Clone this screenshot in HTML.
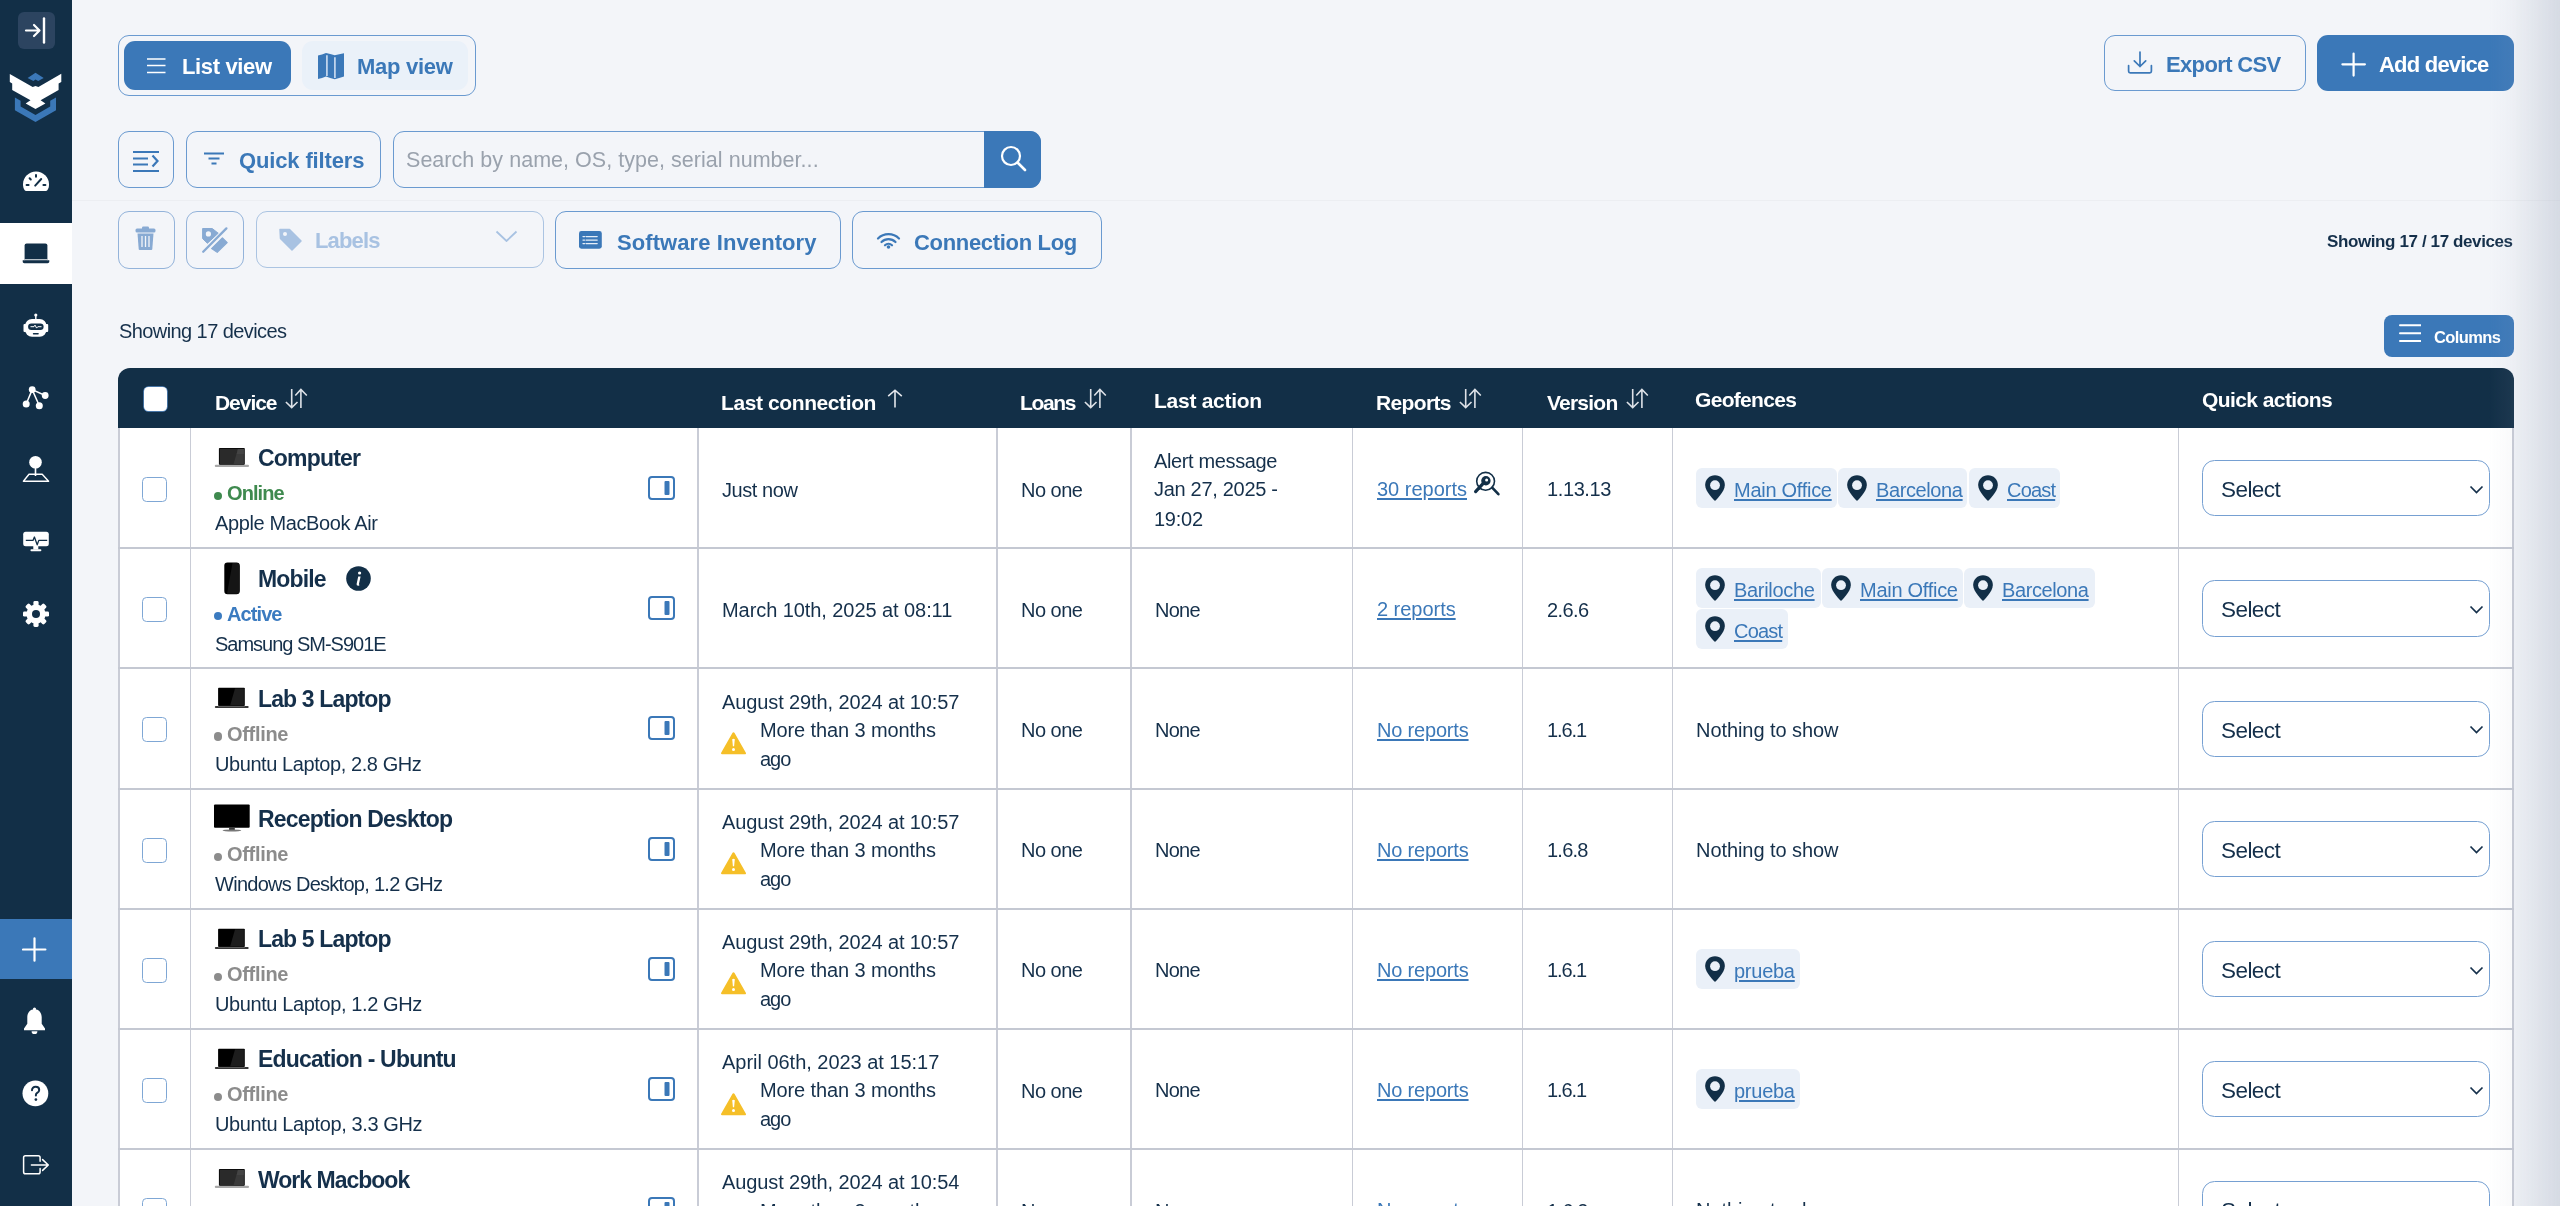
<!DOCTYPE html><html><head><meta charset="utf-8"><style>
html,body{margin:0;padding:0;}
body{width:2560px;height:1206px;overflow:hidden;position:relative;background:#f3f5f9;font-family:"Liberation Sans",sans-serif;}
.t{position:absolute;white-space:nowrap;line-height:1;will-change:transform;}
svg{display:block;}
</style></head><body>
<div style="position:absolute;left:0.0px;top:0.0px;width:72.0px;height:1206.0px;background:#122f47;"></div><div style="position:absolute;left:18.0px;top:12.0px;width:37.0px;height:37.0px;background:#2c4460;border-radius:6px;"></div><svg style="position:absolute;left:18.0px;top:12.0px" width="37" height="37" viewBox="0 0 37 37"><path d="M8 18.5h13.5M16 13l5.5 5.5L16 24" stroke="#fff" stroke-width="2.2" fill="none" stroke-linecap="round" stroke-linejoin="round"/><path d="M26 6.5v24" stroke="#fff" stroke-width="2.4" stroke-linecap="round"/></svg><svg style="position:absolute;left:0;top:60px" width="72" height="70" viewBox="0 60 72 70"><path d="M35.5 72.8 L43.7 77.9 L38.2 81 L35.5 79.5 L33.4 81 L27.6 77.9 Z" fill="#3b78b8"/><path d="M9.8 74 L32.7 87 L35.5 86 L38.4 87 L61.3 73.8 L61.3 82 L58.6 83.4 L58.6 89.9 L40.6 100.2 L45.4 103.4 L35.5 109.1 L25.7 103.4 L30.5 100.2 L12.2 89.9 L12.2 83.4 L9.8 82 Z" fill="#fff"/><path d="M14.9 97.6 L20.6 100.7 L20.6 106.5 L35.5 114.9 L50.2 106.5 L50.2 100.7 L56 97.6 L56 110.3 L35.5 121.9 L14.9 110.3 Z" fill="#3b78b8"/></svg><svg style="position:absolute;left:22.0px;top:170.0px" width="28" height="22" viewBox="0 0 28 22"><path d="M14 1.6C7 1.6 1 7.2 1 14.2c0 2.3 0.5 4.2 1.5 5.8 0.4 0.6 1 0.9 1.7 0.9h19.6c0.7 0 1.3-0.3 1.7-0.9 1-1.6 1.5-3.5 1.5-5.8C27 7.2 21 1.6 14 1.6z" fill="#fff"/>
<g stroke="#122f47" stroke-width="2" stroke-linecap="round"><path d="M14 5v1.8M7.6 8.3l1.2 1.2M4.6 15h2M23.4 15h-2M13.2 15.6l6-6.6"/></g></svg><div style="position:absolute;left:0.0px;top:222.5px;width:72.0px;height:61.0px;background:#fff;"></div><svg style="position:absolute;left:22.0px;top:242.0px" width="28" height="22" viewBox="0 0 28 22"><rect x="2.6" y="1.4" width="22.8" height="18" rx="2" fill="#122f47"/><path d="M0.7 18.2h26.6v1.3c0 1-0.8 1.7-1.7 1.7H2.4c-1 0-1.7-0.7-1.7-1.7z" fill="#122f47"/><rect x="2.6" y="17.3" width="22.8" height="0.9" fill="#fff"/></svg><svg style="position:absolute;left:22.0px;top:312.0px" width="28" height="27" viewBox="0 0 28 27"><circle cx="13.8" cy="3" r="1.6" fill="#fff"/><rect x="13.1" y="3" width="1.4" height="4.5" fill="#fff"/>
<rect x="3" y="7" width="21.6" height="17.8" rx="7" fill="#fff"/><rect x="1.5" y="12" width="3" height="8" rx="1" fill="#fff"/><rect x="23.2" y="12" width="3" height="8" rx="1" fill="#fff"/>
<rect x="6.1" y="11.4" width="15.5" height="6.6" rx="3.3" fill="#122f47"/>
<path d="M8.5 14.7h3.5l1-1.6 1.6 3 1.2-1.4h3.7" stroke="#fff" stroke-width="1" fill="none"/><rect x="10.8" y="21" width="6" height="1.4" rx="0.7" fill="#122f47"/></svg><svg style="position:absolute;left:22.0px;top:385.0px" width="28" height="26" viewBox="0 0 28 26"><g stroke="#fff" stroke-width="1.5" fill="none"><path d="M10.2 4.6 L4.2 19 M10.2 4.6 L17.3 20.8 M10.2 4.6 L23.2 10.5"/></g>
<circle cx="10.2" cy="4.6" r="3.4" fill="#fff"/><circle cx="4.2" cy="19" r="3.5" fill="#fff"/><circle cx="17.3" cy="20.8" r="3.5" fill="#fff"/><circle cx="23.2" cy="10.5" r="3.4" fill="#fff"/></svg><svg style="position:absolute;left:22.0px;top:455.0px" width="28" height="28" viewBox="0 0 28 28"><circle cx="13.5" cy="7.2" r="6.3" fill="#fff"/><rect x="12.7" y="10" width="1.6" height="11" fill="#fff"/>
<path d="M7 19.2 H20.2 L26.6 26.2 H1.4 Z" stroke="#fff" stroke-width="1.4" fill="none" stroke-linejoin="round"/></svg><svg style="position:absolute;left:22.0px;top:529.0px" width="28" height="24" viewBox="0 0 28 24"><rect x="1.2" y="2.8" width="25.6" height="14.4" rx="2.5" fill="#fff"/><rect x="11.3" y="17" width="5" height="3.5" fill="#fff"/><rect x="8.5" y="20.3" width="10.8" height="1.9" rx="0.8" fill="#fff"/>
<path d="M3.8 11.4h7.2l1.4-3.4 2.8 7.8 1.6-4.4h8.4" stroke="#122f47" stroke-width="1.3" fill="none" stroke-linejoin="round"/></svg><svg style="position:absolute;left:22.0px;top:599.6px" width="28" height="28" viewBox="0 0 28 28"><rect x="11.4" y="1" width="5.2" height="6" rx="1.4" fill="#fff" transform="rotate(0 14 14)"/><rect x="11.4" y="1" width="5.2" height="6" rx="1.4" fill="#fff" transform="rotate(45 14 14)"/><rect x="11.4" y="1" width="5.2" height="6" rx="1.4" fill="#fff" transform="rotate(90 14 14)"/><rect x="11.4" y="1" width="5.2" height="6" rx="1.4" fill="#fff" transform="rotate(135 14 14)"/><rect x="11.4" y="1" width="5.2" height="6" rx="1.4" fill="#fff" transform="rotate(180 14 14)"/><rect x="11.4" y="1" width="5.2" height="6" rx="1.4" fill="#fff" transform="rotate(225 14 14)"/><rect x="11.4" y="1" width="5.2" height="6" rx="1.4" fill="#fff" transform="rotate(270 14 14)"/><rect x="11.4" y="1" width="5.2" height="6" rx="1.4" fill="#fff" transform="rotate(315 14 14)"/><circle cx="14" cy="14" r="9.6" fill="#fff"/><circle cx="14" cy="14" r="4" fill="#122f47"/></svg><div style="position:absolute;left:0.0px;top:918.5px;width:72.0px;height:60.5px;background:#3b78b8;"></div><svg style="position:absolute;left:22.0px;top:937.0px" width="25" height="25" viewBox="0 0 25 25"><path d="M12.5 1.3v22.4M1 12.5h22.4" stroke="#fff" stroke-width="2.2" stroke-linecap="round"/></svg><svg style="position:absolute;left:23.0px;top:1007.0px" width="23" height="28" viewBox="0 0 23 28"><path d="M11.5 2.2c-4.3 0-7.2 3.4-7.2 7.8v6.8L1 21.5v1.8h21v-1.8l-3.3-4.7V10c0-4.4-2.9-7.8-7.2-7.8z" fill="#fff"/><circle cx="11.5" cy="2" r="1.6" fill="#fff"/><path d="M8.6 24.2a2.9 2.9 0 0 0 5.8 0z" fill="#fff"/></svg><svg style="position:absolute;left:22.0px;top:1079.5px" width="27" height="27" viewBox="0 0 27 27"><circle cx="13.4" cy="13.4" r="12.9" fill="#fff"/><path d="M10 10.3c0-2.2 1.5-3.6 3.6-3.6 2.1 0 3.6 1.3 3.6 3.2 0 1.6-0.9 2.3-2 3-0.9 0.6-1.3 1.1-1.3 2.1v0.5" stroke="#122f47" stroke-width="2" fill="none" stroke-linecap="round"/><circle cx="13.9" cy="19.6" r="1.35" fill="#122f47"/></svg><svg style="position:absolute;left:15px;top:1148px" width="42" height="34" viewBox="15 1148 42 34"><path d="M40.1 1161.2 V1157.6 Q40.1 1155.8 38.3 1155.8 H25.4 Q23.6 1155.8 23.6 1157.6 V1172 Q23.6 1173.8 25.4 1173.8 H38.3 Q40.1 1173.8 40.1 1172 V1168.6" stroke="#fff" stroke-width="1.5" fill="none" stroke-linecap="round"/><path d="M31.4 1165 H48.3 M42.6 1159.6 L48.3 1165 L42.6 1170.4" stroke="#fff" stroke-width="1.5" fill="none" stroke-linecap="round" stroke-linejoin="round"/></svg><div style="position:absolute;left:118.0px;top:35.0px;width:357.5px;height:60.5px;box-sizing:border-box;border:1.5px solid #6a9ad0;border-radius:11px;"></div><div style="position:absolute;left:124.0px;top:41.0px;width:167.0px;height:49.0px;background:#3b78b8;border-radius:11px;"></div><svg style="position:absolute;left:147.0px;top:58.0px" width="19" height="16" viewBox="0 0 19 16"><path d="M0 1h18.5M0 7.6h18.5M0 14.6h18.5" stroke="#fff" stroke-width="1.5"/></svg><div class="t" style="left:181.7px;top:56.18px;font-size:22px;font-weight:700;color:#fff;letter-spacing:-0.356px;">List view</div><div style="position:absolute;left:302.0px;top:41.0px;width:166.0px;height:49.0px;background:#eaf1f9;border-radius:11px;"></div><svg style="position:absolute;left:317.0px;top:52.0px" width="28" height="28" viewBox="0 0 28 28"><path d="M1 3.5 Q5 2.5 9 1 Q13 1.8 17.8 3.3 Q22 2.2 27 1.3 V24.5 Q22 26.2 17.8 27.3 Q13 26 9 24.5 Q5 26 1 27 Z" fill="#3b78b8"/><path d="M9.9 3.3v20.7M17.9 5.3v20.7" stroke="#c6d8ee" stroke-width="1.7"/></svg><div class="t" style="left:357.0px;top:56.18px;font-size:22px;font-weight:700;color:#3b78b8;letter-spacing:-0.278px;">Map view</div><div style="position:absolute;left:2104.0px;top:34.5px;width:202.0px;height:56.5px;box-sizing:border-box;border:1.5px solid #6a9ad0;border-radius:11px;"></div><svg style="position:absolute;left:2127.0px;top:51.0px" width="26" height="23" viewBox="0 0 26 23"><path d="M13 1v14.5M7.3 9.8l5.7 5.7 5.7-5.7" stroke="#3b78b8" stroke-width="1.7" fill="none" stroke-linecap="round" stroke-linejoin="round"/><path d="M1.6 14.5v5.8c0 0.9 0.7 1.6 1.6 1.6h19.6c0.9 0 1.6-0.7 1.6-1.6v-5.8" stroke="#3b78b8" stroke-width="1.7" fill="none" stroke-linecap="round"/></svg><div class="t" style="left:2165.6px;top:53.58px;font-size:22px;font-weight:700;color:#3b78b8;letter-spacing:-0.644px;">Export CSV</div><div style="position:absolute;left:2317.0px;top:34.5px;width:197.0px;height:56.5px;background:#3b78b8;border-radius:11px;"></div><svg style="position:absolute;left:2341.0px;top:52.0px" width="25" height="25" viewBox="0 0 25 25"><path d="M12.6 1.6v22M1.4 12.3h22.5" stroke="#fff" stroke-width="2.2" stroke-linecap="round"/></svg><div class="t" style="left:2378.9px;top:53.58px;font-size:22px;font-weight:700;color:#fff;letter-spacing:-0.786px;">Add device</div><div style="position:absolute;left:118.0px;top:131.0px;width:56.0px;height:57.0px;box-sizing:border-box;border:1.5px solid #6a9ad0;border-radius:11px;"></div><svg style="position:absolute;left:132.0px;top:150.0px" width="28" height="23" viewBox="0 0 28 23"><path d="M1 2h26M1 8.5h15M1 14.5h15M1 21h26" stroke="#3b78b8" stroke-width="2.2"/><path d="M20.5 5.5l5 5.5-5 5.5" stroke="#3b78b8" stroke-width="2.2" fill="none"/></svg><div style="position:absolute;left:185.5px;top:131.0px;width:195.5px;height:57.0px;box-sizing:border-box;border:1.5px solid #6a9ad0;border-radius:11px;"></div><svg style="position:absolute;left:204.0px;top:152.0px" width="20" height="14" viewBox="0 0 20 14"><path d="M0 1.5h20M4.5 6.5h11M7.5 11.5h5" stroke="#3b78b8" stroke-width="1.9"/></svg><div class="t" style="left:238.8px;top:150.38px;font-size:22px;font-weight:700;color:#3b78b8;letter-spacing:-0.138px;">Quick filters</div><div style="position:absolute;left:392.5px;top:131.0px;width:648.0px;height:56.5px;box-sizing:border-box;border:1.5px solid #6a9ad0;border-radius:11px;overflow:hidden;"></div><div style="position:absolute;left:984.0px;top:131.0px;width:56.5px;height:56.5px;background:#3b78b8;border-radius:0 11px 11px 0;"></div><svg style="position:absolute;left:1000.0px;top:145.0px" width="27" height="27" viewBox="0 0 27 27"><circle cx="11" cy="11" r="9" stroke="#fff" stroke-width="2.2" fill="none"/><path d="M17.5 17.5l7.5 7.5" stroke="#fff" stroke-width="2.6" stroke-linecap="round"/></svg><div class="t" style="left:406.0px;top:149.60px;font-size:21.5px;color:#9aa2ad;letter-spacing:0.037px;">Search by name, OS, type, serial number...</div><div style="position:absolute;left:72.0px;top:199.5px;width:2488.0px;height:1.2px;background:#eceef2;"></div><div style="position:absolute;left:118.0px;top:211.0px;width:57.0px;height:57.5px;box-sizing:border-box;border:1.5px solid #93b3da;border-radius:11px;"></div><svg style="position:absolute;left:135.0px;top:226.0px" width="21" height="24" viewBox="0 0 21 24"><rect x="0.5" y="2.5" width="20" height="4" rx="1.5" fill="#88aad3"/><rect x="7" y="0.5" width="7" height="3" rx="1.2" fill="#88aad3"/><path d="M2.5 7.5h16l-1.2 15.5c-0.1 0.6-0.6 1-1.2 1H4.9c-0.6 0-1.1-0.4-1.2-1z" fill="#88aad3"/><path d="M7 10v11M10.5 10v11M14 10v11" stroke="#f3f5f9" stroke-width="1.3"/></svg><div style="position:absolute;left:186.0px;top:211.0px;width:57.5px;height:57.5px;box-sizing:border-box;border:1.5px solid #93b3da;border-radius:11px;"></div><svg style="position:absolute;left:195.0px;top:220.0px" width="40" height="40" viewBox="0 0 40 40"><path d="M7.6 8.5 H17.2 L23.2 13.2 L12.4 23.3 L7.6 18.6 Z" fill="#88aad3" stroke="#88aad3" stroke-width="1" stroke-linejoin="round"/><circle cx="13.4" cy="13.9" r="2.6" fill="#f3f5f9"/><path d="M8.2 31.7 L31.4 8.4" stroke="#88aad3" stroke-width="2.3" stroke-linecap="round"/><path d="M16.6 28.6 L27.4 17.8 L32.2 22.6 L22.2 32.3 Z" fill="#88aad3" stroke="#88aad3" stroke-width="1.2" stroke-linejoin="round"/></svg><div style="position:absolute;left:256.0px;top:211.0px;width:287.5px;height:57.0px;box-sizing:border-box;border:1.4px solid #abc4e2;border-radius:11px;"></div><svg style="position:absolute;left:279.0px;top:228.0px" width="23" height="23" viewBox="0 0 23 23"><path d="M1 1.5h9.5L22 13l-9 9L1.5 10.5z" fill="#a8c2e2" stroke="#a8c2e2" stroke-width="1.5" stroke-linejoin="round"/><circle cx="6" cy="6" r="2" fill="#f3f5f9"/></svg><div class="t" style="left:314.8px;top:229.68px;font-size:22px;font-weight:700;color:#a8c2e2;letter-spacing:-0.857px;">Labels</div><svg style="position:absolute;left:495.0px;top:230.0px" width="23" height="12" viewBox="0 0 23 12"><path d="M1.5 1.5l10 9.5 10-9.5" stroke="#a8c2e2" stroke-width="1.8" fill="none"/></svg><div style="position:absolute;left:555.0px;top:211.0px;width:285.5px;height:57.5px;box-sizing:border-box;border:1.5px solid #6a9ad0;border-radius:11px;"></div><svg style="position:absolute;left:579.0px;top:231.0px" width="23" height="18" viewBox="0 0 23 18"><rect x="0" y="0.1" width="22.8" height="17.6" rx="2.4" fill="#3b78b8"/><path d="M4 5.6h1.6M4 9.1h1.6M4 12.6h1.6M7.1 5.6h11.1M7.1 9.1h11.1M7.1 12.6h11.1" stroke="#e6eef8" stroke-width="1.3" stroke-linecap="round"/></svg><div class="t" style="left:617.0px;top:231.58px;font-size:22px;font-weight:700;color:#3b78b8;letter-spacing:0.085px;">Software Inventory</div><div style="position:absolute;left:852.0px;top:211.0px;width:250.0px;height:57.5px;box-sizing:border-box;border:1.5px solid #6a9ad0;border-radius:11px;"></div><svg style="position:absolute;left:876.0px;top:232.0px" width="25" height="17" viewBox="0 0 25 17"><path d="M2 6.5a15 15 0 0 1 21 0M5.5 10a10 10 0 0 1 14 0M9 13.3a5 5 0 0 1 7 0" stroke="#3b78b8" stroke-width="2.2" fill="none" stroke-linecap="round"/><circle cx="12.5" cy="15" r="1.8" fill="#3b78b8"/></svg><div class="t" style="left:914.3px;top:231.58px;font-size:22px;font-weight:700;color:#3b78b8;letter-spacing:-0.317px;">Connection Log</div><div class="t" style="left:2327.2px;top:233.21px;font-size:17px;font-weight:700;color:#15304b;letter-spacing:-0.389px;">Showing 17 / 17 devices</div><div class="t" style="left:119.0px;top:321.07px;font-size:20px;color:#15304b;letter-spacing:-0.582px;">Showing 17 devices</div><div style="position:absolute;left:2384.0px;top:315.0px;width:130.0px;height:41.5px;background:#3b78b8;border-radius:8px;"></div><svg style="position:absolute;left:2399.0px;top:323.0px" width="22" height="21" viewBox="0 0 22 21"><path d="M1 2.3h20.6M1 10.2h20.6M1 18.1h20.6" stroke="#fff" stroke-width="2" stroke-linecap="round"/></svg><div class="t" style="left:2434.0px;top:329.03px;font-size:16.5px;font-weight:700;color:#fff;letter-spacing:-0.63px;">Columns</div><div style="position:absolute;left:118.0px;top:368.0px;width:2396.0px;height:60.0px;background:#122f47;border-radius:12px 12px 0 0;"></div><div style="position:absolute;left:118.0px;top:428.0px;width:2396.0px;height:778.0px;background:#fff;"></div><div style="position:absolute;left:118.2px;top:428.0px;width:1.6px;height:778.0px;background:#c9ccd6;"></div><div style="position:absolute;left:189.6px;top:428.0px;width:1.6px;height:778.0px;background:#c9ccd6;"></div><div style="position:absolute;left:697.0px;top:428.0px;width:1.6px;height:778.0px;background:#c9ccd6;"></div><div style="position:absolute;left:996.2px;top:428.0px;width:1.6px;height:778.0px;background:#c9ccd6;"></div><div style="position:absolute;left:1130.4px;top:428.0px;width:1.6px;height:778.0px;background:#c9ccd6;"></div><div style="position:absolute;left:1351.7px;top:428.0px;width:1.6px;height:778.0px;background:#c9ccd6;"></div><div style="position:absolute;left:1521.7px;top:428.0px;width:1.6px;height:778.0px;background:#c9ccd6;"></div><div style="position:absolute;left:1671.5px;top:428.0px;width:1.6px;height:778.0px;background:#c9ccd6;"></div><div style="position:absolute;left:2177.8px;top:428.0px;width:1.6px;height:778.0px;background:#c9ccd6;"></div><div style="position:absolute;left:2512.2px;top:428.0px;width:1.6px;height:778.0px;background:#c9ccd6;"></div><div style="position:absolute;left:118.0px;top:547.0px;width:2396.0px;height:1.6px;background:#c4c8d2;"></div><div style="position:absolute;left:118.0px;top:667.0px;width:2396.0px;height:1.6px;background:#c4c8d2;"></div><div style="position:absolute;left:118.0px;top:788.0px;width:2396.0px;height:1.6px;background:#c4c8d2;"></div><div style="position:absolute;left:118.0px;top:908.0px;width:2396.0px;height:1.6px;background:#c4c8d2;"></div><div style="position:absolute;left:118.0px;top:1028.0px;width:2396.0px;height:1.6px;background:#c4c8d2;"></div><div style="position:absolute;left:118.0px;top:1148.0px;width:2396.0px;height:1.6px;background:#c4c8d2;"></div><div style="position:absolute;left:144.3px;top:387.2px;width:23.0px;height:23.6px;background:#fff;border-radius:4.5px;box-shadow:0 0 0 0.7px #5a8dc6;"></div><div class="t" style="left:214.6px;top:391.82px;font-size:21px;font-weight:700;color:#ffffff;letter-spacing:-1.045px;">Device</div><svg style="position:absolute;left:285.2px;top:388.0px" width="23" height="22" viewBox="0 0 23 22"><path d="M6.7 1 V19.6 M0.9 14 L6.7 19.6 L12.5 14" stroke="#dde1e7" stroke-width="1.6" fill="none"/><path d="M15.9 20 V1.5 M10.3 7.5 L15.9 1.5 L21.8 7.5" stroke="#dde1e7" stroke-width="1.6" fill="none"/></svg><div class="t" style="left:721.1px;top:391.82px;font-size:21px;font-weight:700;color:#ffffff;letter-spacing:-0.401px;">Last connection</div><svg style="position:absolute;left:887.0px;top:389.0px" width="16" height="20" viewBox="0 0 16 20"><path d="M8 18.6V1.2M1.2 7.2L8 1.2L14.8 7.2" stroke="#e3e6eb" stroke-width="1.6" fill="none"/></svg><div class="t" style="left:1020.0px;top:391.82px;font-size:21px;font-weight:700;color:#ffffff;letter-spacing:-1.336px;">Loans</div><svg style="position:absolute;left:1083.6px;top:388.0px" width="23" height="22" viewBox="0 0 23 22"><path d="M6.7 1 V19.6 M0.9 14 L6.7 19.6 L12.5 14" stroke="#dde1e7" stroke-width="1.6" fill="none"/><path d="M15.9 20 V1.5 M10.3 7.5 L15.9 1.5 L21.8 7.5" stroke="#dde1e7" stroke-width="1.6" fill="none"/></svg><div class="t" style="left:1154.4px;top:389.82px;font-size:21px;font-weight:700;color:#ffffff;letter-spacing:-0.268px;">Last action</div><div class="t" style="left:1376.3px;top:391.82px;font-size:21px;font-weight:700;color:#ffffff;letter-spacing:-0.655px;">Reports</div><svg style="position:absolute;left:1459.0px;top:388.0px" width="23" height="22" viewBox="0 0 23 22"><path d="M6.7 1 V19.6 M0.9 14 L6.7 19.6 L12.5 14" stroke="#dde1e7" stroke-width="1.6" fill="none"/><path d="M15.9 20 V1.5 M10.3 7.5 L15.9 1.5 L21.8 7.5" stroke="#dde1e7" stroke-width="1.6" fill="none"/></svg><div class="t" style="left:1546.8px;top:391.82px;font-size:21px;font-weight:700;color:#ffffff;letter-spacing:-0.777px;">Version</div><svg style="position:absolute;left:1625.5px;top:388.0px" width="23" height="22" viewBox="0 0 23 22"><path d="M6.7 1 V19.6 M0.9 14 L6.7 19.6 L12.5 14" stroke="#dde1e7" stroke-width="1.6" fill="none"/><path d="M15.9 20 V1.5 M10.3 7.5 L15.9 1.5 L21.8 7.5" stroke="#dde1e7" stroke-width="1.6" fill="none"/></svg><div class="t" style="left:1695.2px;top:389.02px;font-size:21px;font-weight:700;color:#ffffff;letter-spacing:-0.683px;">Geofences</div><div class="t" style="left:2201.5px;top:389.02px;font-size:21px;font-weight:700;color:#ffffff;letter-spacing:-0.576px;">Quick actions</div><div style="position:absolute;left:142.0px;top:477.0px;width:25.0px;height:25.0px;box-sizing:border-box;border:1.6px solid #7fa7d5;border-radius:4.5px;background:#fff;"></div><svg style="position:absolute;left:210.0px;top:440.0px" width="44" height="32" viewBox="0 0 44 32"><rect x="8.9" y="8" width="25.9" height="16.9" rx="0.8" fill="#0c0c0c"/><rect x="9.9" y="9" width="23.9" height="15" fill="#2a2a2a"/>
<path d="M27.9 9 H33.8 V24 H23.6 Z" fill="#3a3a3a"/><path d="M27.9 9 H33.8 V14 H26.7 Z" fill="#444"/>
<rect x="4.8" y="24.8" width="34.2" height="2.1" rx="1" fill="#a9a9a9"/></svg><div class="t" style="left:257.7px;top:447.33px;font-size:23px;font-weight:700;color:#15304b;letter-spacing:-0.803px;">Computer</div><div style="position:absolute;left:214.0px;top:492.0px;width:8.3px;height:8.3px;background:#3f8a4f;border-radius:50%;"></div><div class="t" style="left:227.4px;top:483.37px;font-size:20px;font-weight:700;color:#3f8a4f;letter-spacing:-0.93px;">Online</div><div class="t" style="left:214.5px;top:513.37px;font-size:20px;color:#15304b;letter-spacing:-0.375px;">Apple MacBook Air</div><svg style="position:absolute;left:647.5px;top:476.0px" width="27" height="24" viewBox="0 0 27 24"><rect x="1" y="1" width="25" height="22" rx="3" stroke="#3b78b8" stroke-width="2" fill="#fff"/><rect x="16.5" y="5" width="5" height="14" rx="1" fill="#3b78b8"/></svg><div class="t" style="left:721.9px;top:479.57px;font-size:20px;color:#15304b;letter-spacing:-0.429px;">Just now</div><div class="t" style="left:1020.5px;top:479.57px;font-size:20px;color:#15304b;letter-spacing:-0.5px;">No one</div><div class="t" style="left:1154.4px;top:451.27px;font-size:20px;color:#15304b;letter-spacing:-0.362px;">Alert message</div><div class="t" style="left:1154.4px;top:479.47px;font-size:20px;color:#15304b;letter-spacing:-0.3px;">Jan 27, 2025 -</div><div class="t" style="left:1154.4px;top:508.67px;font-size:20px;color:#15304b;letter-spacing:-0.262px;">19:02</div><div class="t" style="left:1376.6px;top:479.17px;font-size:20px;color:#3b78b8;letter-spacing:-0.006px;text-decoration:underline;text-underline-offset:1.5px;text-decoration-thickness:1.8px;">30 reports</div><svg style="position:absolute;left:1470.0px;top:468.0px" width="32" height="30" viewBox="0 0 32 30"><circle cx="15.6" cy="13.3" r="8.9" stroke="#122f47" stroke-width="1.6" fill="none"/><path d="M22.2 19.6 L28.4 26.2" stroke="#122f47" stroke-width="2.6" stroke-linecap="round"/><circle cx="15.9" cy="12.7" r="4.7" fill="#122f47"/><circle cx="16.6" cy="12.1" r="1.5" fill="#fff"/><path d="M13 15.6 L5.6 23.6" stroke="#122f47" stroke-width="3.2" stroke-linecap="round"/><path d="M8.5 19.5 L10.3 21.3" stroke="#122f47" stroke-width="2"/></svg><div class="t" style="left:1547.3px;top:479.37px;font-size:20px;color:#15304b;letter-spacing:-0.392px;">1.13.13</div><div style="position:absolute;left:1696.2px;top:468.3px;width:140.7px;height:39.5px;background:#eaf0f8;border-radius:6px;"></div><svg style="position:absolute;left:1703.7px;top:473.8px" width="22" height="29" viewBox="0 0 22 29"><path d="M11 1.3C5.6 1.3 1.15 5.5 1.15 11c0 7 9.85 15.9 9.85 15.9S20.85 18 20.85 11C20.85 5.5 16.4 1.3 11 1.3z" fill="#122f47"/><circle cx="11" cy="11.2" r="4.9" fill="#eaf0f8"/></svg><div class="t" style="left:1733.8px;top:480.07px;font-size:20px;color:#3b78b8;letter-spacing:-0.28px;text-decoration:underline;text-underline-offset:1.5px;text-decoration-thickness:1.8px;">Main Office</div><div style="position:absolute;left:1838.4px;top:468.3px;width:129.1px;height:39.5px;background:#eaf0f8;border-radius:6px;"></div><svg style="position:absolute;left:1845.9px;top:473.8px" width="22" height="29" viewBox="0 0 22 29"><path d="M11 1.3C5.6 1.3 1.15 5.5 1.15 11c0 7 9.85 15.9 9.85 15.9S20.85 18 20.85 11C20.85 5.5 16.4 1.3 11 1.3z" fill="#122f47"/><circle cx="11" cy="11.2" r="4.9" fill="#eaf0f8"/></svg><div class="t" style="left:1876.0px;top:480.07px;font-size:20px;color:#3b78b8;letter-spacing:-0.387px;text-decoration:underline;text-underline-offset:1.5px;text-decoration-thickness:1.8px;">Barcelona</div><div style="position:absolute;left:1969.0px;top:468.3px;width:91.4px;height:39.5px;background:#eaf0f8;border-radius:6px;"></div><svg style="position:absolute;left:1976.5px;top:473.8px" width="22" height="29" viewBox="0 0 22 29"><path d="M11 1.3C5.6 1.3 1.15 5.5 1.15 11c0 7 9.85 15.9 9.85 15.9S20.85 18 20.85 11C20.85 5.5 16.4 1.3 11 1.3z" fill="#122f47"/><circle cx="11" cy="11.2" r="4.9" fill="#eaf0f8"/></svg><div class="t" style="left:2006.6px;top:480.07px;font-size:20px;color:#3b78b8;letter-spacing:-0.812px;text-decoration:underline;text-underline-offset:1.5px;text-decoration-thickness:1.8px;">Coast</div><div style="position:absolute;left:2201.5px;top:460.2px;width:288.5px;height:56.2px;box-sizing:border-box;border:1.6px solid #76a0d2;border-radius:12.5px;background:#fff;"></div><div class="t" style="left:2220.9px;top:479.15px;font-size:22.5px;color:#15304b;letter-spacing:-0.57px;">Select</div><svg style="position:absolute;left:2469.0px;top:484.7px" width="15" height="9" viewBox="0 0 15 9"><path d="M1.5 1.5l6 6 6-6" stroke="#15304b" stroke-width="1.7" fill="none"/></svg><div style="position:absolute;left:142.0px;top:597.2px;width:25.0px;height:25.0px;box-sizing:border-box;border:1.6px solid #7fa7d5;border-radius:4.5px;background:#fff;"></div><svg style="position:absolute;left:223.0px;top:561.7px" width="18" height="33" viewBox="0 0 18 33"><rect x="1.3" y="0.6" width="15.4" height="31.6" rx="3.2" fill="#000"/><path d="M9.5 1 H13.5 Q16.6 1 16.6 4 V28 Q16.6 31.8 13.5 31.8 H4 Z" fill="#151515"/></svg><div class="t" style="left:257.7px;top:567.53px;font-size:23px;font-weight:700;color:#15304b;letter-spacing:-0.871px;">Mobile</div><svg style="position:absolute;left:345.5px;top:565.9px" width="25" height="25" viewBox="0 0 25 25"><circle cx="12.5" cy="12.5" r="12.3" fill="#122f47"/><circle cx="13.6" cy="7" r="1.6" fill="#fff"/><path d="M12.2 10.5 H14.6 L12.9 18.2 Q12.8 18.8 13.5 18.6 L13.3 19.6 Q10.2 20.2 10.6 18 Z" fill="#fff"/></svg><div style="position:absolute;left:214.0px;top:612.2px;width:8.3px;height:8.3px;background:#3b7bc0;border-radius:50%;"></div><div class="t" style="left:227.4px;top:603.57px;font-size:20px;font-weight:700;color:#3b7bc0;letter-spacing:-0.91px;">Active</div><div class="t" style="left:214.5px;top:633.57px;font-size:20px;color:#15304b;letter-spacing:-1.01px;">Samsung SM-S901E</div><svg style="position:absolute;left:647.5px;top:596.2px" width="27" height="24" viewBox="0 0 27 24"><rect x="1" y="1" width="25" height="22" rx="3" stroke="#3b78b8" stroke-width="2" fill="#fff"/><rect x="16.5" y="5" width="5" height="14" rx="1" fill="#3b78b8"/></svg><div class="t" style="left:721.9px;top:599.77px;font-size:20px;color:#15304b;letter-spacing:-0.071px;">March 10th, 2025 at 08:11</div><div class="t" style="left:1020.5px;top:599.77px;font-size:20px;color:#15304b;letter-spacing:-0.5px;">No one</div><div class="t" style="left:1154.9px;top:599.57px;font-size:20px;color:#15304b;letter-spacing:-0.733px;">None</div><div class="t" style="left:1376.6px;top:599.37px;font-size:20px;color:#3b78b8;letter-spacing:-0.031px;text-decoration:underline;text-underline-offset:1.5px;text-decoration-thickness:1.8px;">2 reports</div><div class="t" style="left:1547.3px;top:599.57px;font-size:20px;color:#15304b;letter-spacing:-0.575px;">2.6.6</div><div style="position:absolute;left:1696.2px;top:568.4px;width:124.5px;height:39.5px;background:#eaf0f8;border-radius:6px;"></div><svg style="position:absolute;left:1703.7px;top:573.9px" width="22" height="29" viewBox="0 0 22 29"><path d="M11 1.3C5.6 1.3 1.15 5.5 1.15 11c0 7 9.85 15.9 9.85 15.9S20.85 18 20.85 11C20.85 5.5 16.4 1.3 11 1.3z" fill="#122f47"/><circle cx="11" cy="11.2" r="4.9" fill="#eaf0f8"/></svg><div class="t" style="left:1733.8px;top:580.17px;font-size:20px;color:#3b78b8;letter-spacing:-0.312px;text-decoration:underline;text-underline-offset:1.5px;text-decoration-thickness:1.8px;">Bariloche</div><div style="position:absolute;left:1822.2px;top:568.4px;width:140.7px;height:39.5px;background:#eaf0f8;border-radius:6px;"></div><svg style="position:absolute;left:1829.7px;top:573.9px" width="22" height="29" viewBox="0 0 22 29"><path d="M11 1.3C5.6 1.3 1.15 5.5 1.15 11c0 7 9.85 15.9 9.85 15.9S20.85 18 20.85 11C20.85 5.5 16.4 1.3 11 1.3z" fill="#122f47"/><circle cx="11" cy="11.2" r="4.9" fill="#eaf0f8"/></svg><div class="t" style="left:1859.8px;top:580.17px;font-size:20px;color:#3b78b8;letter-spacing:-0.28px;text-decoration:underline;text-underline-offset:1.5px;text-decoration-thickness:1.8px;">Main Office</div><div style="position:absolute;left:1964.4px;top:568.4px;width:130.5px;height:39.5px;background:#eaf0f8;border-radius:6px;"></div><svg style="position:absolute;left:1971.9px;top:573.9px" width="22" height="29" viewBox="0 0 22 29"><path d="M11 1.3C5.6 1.3 1.15 5.5 1.15 11c0 7 9.85 15.9 9.85 15.9S20.85 18 20.85 11C20.85 5.5 16.4 1.3 11 1.3z" fill="#122f47"/><circle cx="11" cy="11.2" r="4.9" fill="#eaf0f8"/></svg><div class="t" style="left:2002.0px;top:580.17px;font-size:20px;color:#3b78b8;letter-spacing:-0.387px;text-decoration:underline;text-underline-offset:1.5px;text-decoration-thickness:1.8px;">Barcelona</div><div style="position:absolute;left:1696.2px;top:609.2px;width:91.4px;height:39.5px;background:#eaf0f8;border-radius:6px;"></div><svg style="position:absolute;left:1703.7px;top:614.7px" width="22" height="29" viewBox="0 0 22 29"><path d="M11 1.3C5.6 1.3 1.15 5.5 1.15 11c0 7 9.85 15.9 9.85 15.9S20.85 18 20.85 11C20.85 5.5 16.4 1.3 11 1.3z" fill="#122f47"/><circle cx="11" cy="11.2" r="4.9" fill="#eaf0f8"/></svg><div class="t" style="left:1733.8px;top:620.97px;font-size:20px;color:#3b78b8;letter-spacing:-0.812px;text-decoration:underline;text-underline-offset:1.5px;text-decoration-thickness:1.8px;">Coast</div><div style="position:absolute;left:2201.5px;top:580.4px;width:288.5px;height:56.2px;box-sizing:border-box;border:1.6px solid #76a0d2;border-radius:12.5px;background:#fff;"></div><div class="t" style="left:2220.9px;top:599.35px;font-size:22.5px;color:#15304b;letter-spacing:-0.57px;">Select</div><svg style="position:absolute;left:2469.0px;top:604.9px" width="15" height="9" viewBox="0 0 15 9"><path d="M1.5 1.5l6 6 6-6" stroke="#15304b" stroke-width="1.7" fill="none"/></svg><div style="position:absolute;left:142.0px;top:717.4px;width:25.0px;height:25.0px;box-sizing:border-box;border:1.6px solid #7fa7d5;border-radius:4.5px;background:#fff;"></div><svg style="position:absolute;left:210.0px;top:680.4px" width="44" height="32" viewBox="0 0 44 32"><rect x="8.1" y="7.7" width="26.7" height="18.3" rx="0.8" fill="#000"/><path d="M25 8.6 H33.9 V25.2 H20.2 Z" fill="#1d1d1d"/>
<rect x="4.8" y="25.9" width="33.9" height="2.2" rx="1.1" fill="#383838"/><rect x="8" y="25.9" width="27" height="0.7" fill="#777"/></svg><div class="t" style="left:257.7px;top:687.73px;font-size:23px;font-weight:700;color:#15304b;letter-spacing:-0.865px;">Lab 3 Laptop</div><div style="position:absolute;left:214.0px;top:732.4px;width:8.3px;height:8.3px;background:#8c8c8c;border-radius:50%;"></div><div class="t" style="left:227.4px;top:723.77px;font-size:20px;font-weight:700;color:#8c8c8c;letter-spacing:-0.308px;">Offline</div><div class="t" style="left:214.5px;top:753.77px;font-size:20px;color:#15304b;letter-spacing:-0.424px;">Ubuntu Laptop, 2.8 GHz</div><svg style="position:absolute;left:647.5px;top:716.4px" width="27" height="24" viewBox="0 0 27 24"><rect x="1" y="1" width="25" height="22" rx="3" stroke="#3b78b8" stroke-width="2" fill="#fff"/><rect x="16.5" y="5" width="5" height="14" rx="1" fill="#3b78b8"/></svg><div class="t" style="left:721.8px;top:691.67px;font-size:20px;color:#15304b;letter-spacing:-0.112px;">August 29th, 2024 at 10:57</div><svg style="position:absolute;left:721.0px;top:731.9px" width="26" height="23" viewBox="0 0 26 23"><path d="M12.5 1.4 L23.9 21.2 H1.1 Z" fill="#f5bf28" stroke="#f5bf28" stroke-width="2.2" stroke-linejoin="round"/><path d="M11.2 7.2 Q12.5 6.4 13.8 7.2 L13.1 14.3 H11.9 Z" fill="#fff"/><circle cx="12.5" cy="17.6" r="1.5" fill="#fff"/></svg><div class="t" style="left:759.8px;top:719.77px;font-size:20px;color:#15304b;letter-spacing:-0.112px;">More than 3 months</div><div class="t" style="left:759.8px;top:748.57px;font-size:20px;color:#15304b;letter-spacing:-1.025px;">ago</div><div class="t" style="left:1020.5px;top:719.97px;font-size:20px;color:#15304b;letter-spacing:-0.5px;">No one</div><div class="t" style="left:1154.9px;top:719.77px;font-size:20px;color:#15304b;letter-spacing:-0.733px;">None</div><div class="t" style="left:1376.6px;top:719.57px;font-size:20px;color:#3b78b8;letter-spacing:-0.183px;text-decoration:underline;text-underline-offset:1.5px;text-decoration-thickness:1.8px;">No reports</div><div class="t" style="left:1547.3px;top:719.77px;font-size:20px;color:#15304b;letter-spacing:-1.075px;">1.6.1</div><div class="t" style="left:1696.2px;top:719.57px;font-size:20px;color:#15304b;letter-spacing:-0.064px;">Nothing to show</div><div style="position:absolute;left:2201.5px;top:700.6px;width:288.5px;height:56.2px;box-sizing:border-box;border:1.6px solid #76a0d2;border-radius:12.5px;background:#fff;"></div><div class="t" style="left:2220.9px;top:719.55px;font-size:22.5px;color:#15304b;letter-spacing:-0.57px;">Select</div><svg style="position:absolute;left:2469.0px;top:725.1px" width="15" height="9" viewBox="0 0 15 9"><path d="M1.5 1.5l6 6 6-6" stroke="#15304b" stroke-width="1.7" fill="none"/></svg><div style="position:absolute;left:142.0px;top:837.6px;width:25.0px;height:25.0px;box-sizing:border-box;border:1.6px solid #7fa7d5;border-radius:4.5px;background:#fff;"></div><svg style="position:absolute;left:210.0px;top:800.0px" width="44" height="36" viewBox="0 0 44 36"><rect x="4" y="4.5" width="35.7" height="23.3" rx="1" fill="#000"/><rect x="19.1" y="27.8" width="5.7" height="2.4" fill="#3a3a3a"/><ellipse cx="21.9" cy="30.5" rx="9.4" ry="0.9" fill="#777"/></svg><div class="t" style="left:257.7px;top:807.93px;font-size:23px;font-weight:700;color:#15304b;letter-spacing:-0.826px;">Reception Desktop</div><div style="position:absolute;left:214.0px;top:852.6px;width:8.3px;height:8.3px;background:#8c8c8c;border-radius:50%;"></div><div class="t" style="left:227.4px;top:843.97px;font-size:20px;font-weight:700;color:#8c8c8c;letter-spacing:-0.308px;">Offline</div><div class="t" style="left:214.5px;top:873.97px;font-size:20px;color:#15304b;letter-spacing:-0.72px;">Windows Desktop, 1.2 GHz</div><svg style="position:absolute;left:647.5px;top:836.6px" width="27" height="24" viewBox="0 0 27 24"><rect x="1" y="1" width="25" height="22" rx="3" stroke="#3b78b8" stroke-width="2" fill="#fff"/><rect x="16.5" y="5" width="5" height="14" rx="1" fill="#3b78b8"/></svg><div class="t" style="left:721.8px;top:811.87px;font-size:20px;color:#15304b;letter-spacing:-0.112px;">August 29th, 2024 at 10:57</div><svg style="position:absolute;left:721.0px;top:852.1px" width="26" height="23" viewBox="0 0 26 23"><path d="M12.5 1.4 L23.9 21.2 H1.1 Z" fill="#f5bf28" stroke="#f5bf28" stroke-width="2.2" stroke-linejoin="round"/><path d="M11.2 7.2 Q12.5 6.4 13.8 7.2 L13.1 14.3 H11.9 Z" fill="#fff"/><circle cx="12.5" cy="17.6" r="1.5" fill="#fff"/></svg><div class="t" style="left:759.8px;top:839.97px;font-size:20px;color:#15304b;letter-spacing:-0.112px;">More than 3 months</div><div class="t" style="left:759.8px;top:868.77px;font-size:20px;color:#15304b;letter-spacing:-1.025px;">ago</div><div class="t" style="left:1020.5px;top:840.17px;font-size:20px;color:#15304b;letter-spacing:-0.5px;">No one</div><div class="t" style="left:1154.9px;top:839.97px;font-size:20px;color:#15304b;letter-spacing:-0.733px;">None</div><div class="t" style="left:1376.6px;top:839.77px;font-size:20px;color:#3b78b8;letter-spacing:-0.183px;text-decoration:underline;text-underline-offset:1.5px;text-decoration-thickness:1.8px;">No reports</div><div class="t" style="left:1547.3px;top:839.97px;font-size:20px;color:#15304b;letter-spacing:-0.75px;">1.6.8</div><div class="t" style="left:1696.2px;top:839.77px;font-size:20px;color:#15304b;letter-spacing:-0.064px;">Nothing to show</div><div style="position:absolute;left:2201.5px;top:820.8px;width:288.5px;height:56.2px;box-sizing:border-box;border:1.6px solid #76a0d2;border-radius:12.5px;background:#fff;"></div><div class="t" style="left:2220.9px;top:839.75px;font-size:22.5px;color:#15304b;letter-spacing:-0.57px;">Select</div><svg style="position:absolute;left:2469.0px;top:845.3px" width="15" height="9" viewBox="0 0 15 9"><path d="M1.5 1.5l6 6 6-6" stroke="#15304b" stroke-width="1.7" fill="none"/></svg><div style="position:absolute;left:142.0px;top:957.8px;width:25.0px;height:25.0px;box-sizing:border-box;border:1.6px solid #7fa7d5;border-radius:4.5px;background:#fff;"></div><svg style="position:absolute;left:210.0px;top:920.8px" width="44" height="32" viewBox="0 0 44 32"><rect x="8.1" y="7.7" width="26.7" height="18.3" rx="0.8" fill="#000"/><path d="M25 8.6 H33.9 V25.2 H20.2 Z" fill="#1d1d1d"/>
<rect x="4.8" y="25.9" width="33.9" height="2.2" rx="1.1" fill="#383838"/><rect x="8" y="25.9" width="27" height="0.7" fill="#777"/></svg><div class="t" style="left:257.7px;top:928.13px;font-size:23px;font-weight:700;color:#15304b;letter-spacing:-0.865px;">Lab 5 Laptop</div><div style="position:absolute;left:214.0px;top:972.8px;width:8.3px;height:8.3px;background:#8c8c8c;border-radius:50%;"></div><div class="t" style="left:227.4px;top:964.17px;font-size:20px;font-weight:700;color:#8c8c8c;letter-spacing:-0.308px;">Offline</div><div class="t" style="left:214.5px;top:994.17px;font-size:20px;color:#15304b;letter-spacing:-0.405px;">Ubuntu Laptop, 1.2 GHz</div><svg style="position:absolute;left:647.5px;top:956.8px" width="27" height="24" viewBox="0 0 27 24"><rect x="1" y="1" width="25" height="22" rx="3" stroke="#3b78b8" stroke-width="2" fill="#fff"/><rect x="16.5" y="5" width="5" height="14" rx="1" fill="#3b78b8"/></svg><div class="t" style="left:721.8px;top:932.07px;font-size:20px;color:#15304b;letter-spacing:-0.112px;">August 29th, 2024 at 10:57</div><svg style="position:absolute;left:721.0px;top:972.3px" width="26" height="23" viewBox="0 0 26 23"><path d="M12.5 1.4 L23.9 21.2 H1.1 Z" fill="#f5bf28" stroke="#f5bf28" stroke-width="2.2" stroke-linejoin="round"/><path d="M11.2 7.2 Q12.5 6.4 13.8 7.2 L13.1 14.3 H11.9 Z" fill="#fff"/><circle cx="12.5" cy="17.6" r="1.5" fill="#fff"/></svg><div class="t" style="left:759.8px;top:960.17px;font-size:20px;color:#15304b;letter-spacing:-0.112px;">More than 3 months</div><div class="t" style="left:759.8px;top:988.97px;font-size:20px;color:#15304b;letter-spacing:-1.025px;">ago</div><div class="t" style="left:1020.5px;top:960.37px;font-size:20px;color:#15304b;letter-spacing:-0.5px;">No one</div><div class="t" style="left:1154.9px;top:960.17px;font-size:20px;color:#15304b;letter-spacing:-0.733px;">None</div><div class="t" style="left:1376.6px;top:959.97px;font-size:20px;color:#3b78b8;letter-spacing:-0.183px;text-decoration:underline;text-underline-offset:1.5px;text-decoration-thickness:1.8px;">No reports</div><div class="t" style="left:1547.3px;top:960.17px;font-size:20px;color:#15304b;letter-spacing:-1.075px;">1.6.1</div><div style="position:absolute;left:1696.2px;top:949.1px;width:104.0px;height:39.5px;background:#eaf0f8;border-radius:6px;"></div><svg style="position:absolute;left:1703.7px;top:954.6px" width="22" height="29" viewBox="0 0 22 29"><path d="M11 1.3C5.6 1.3 1.15 5.5 1.15 11c0 7 9.85 15.9 9.85 15.9S20.85 18 20.85 11C20.85 5.5 16.4 1.3 11 1.3z" fill="#122f47"/><circle cx="11" cy="11.2" r="4.9" fill="#eaf0f8"/></svg><div class="t" style="left:1733.8px;top:960.87px;font-size:20px;color:#3b78b8;letter-spacing:-0.26px;text-decoration:underline;text-underline-offset:1.5px;text-decoration-thickness:1.8px;">prueba</div><div style="position:absolute;left:2201.5px;top:941.0px;width:288.5px;height:56.2px;box-sizing:border-box;border:1.6px solid #76a0d2;border-radius:12.5px;background:#fff;"></div><div class="t" style="left:2220.9px;top:959.95px;font-size:22.5px;color:#15304b;letter-spacing:-0.57px;">Select</div><svg style="position:absolute;left:2469.0px;top:965.5px" width="15" height="9" viewBox="0 0 15 9"><path d="M1.5 1.5l6 6 6-6" stroke="#15304b" stroke-width="1.7" fill="none"/></svg><div style="position:absolute;left:142.0px;top:1078.0px;width:25.0px;height:25.0px;box-sizing:border-box;border:1.6px solid #7fa7d5;border-radius:4.5px;background:#fff;"></div><svg style="position:absolute;left:210.0px;top:1041.0px" width="44" height="32" viewBox="0 0 44 32"><rect x="8.1" y="7.7" width="26.7" height="18.3" rx="0.8" fill="#000"/><path d="M25 8.6 H33.9 V25.2 H20.2 Z" fill="#1d1d1d"/>
<rect x="4.8" y="25.9" width="33.9" height="2.2" rx="1.1" fill="#383838"/><rect x="8" y="25.9" width="27" height="0.7" fill="#777"/></svg><div class="t" style="left:257.7px;top:1048.33px;font-size:23px;font-weight:700;color:#15304b;letter-spacing:-0.792px;">Education - Ubuntu</div><div style="position:absolute;left:214.0px;top:1093.0px;width:8.3px;height:8.3px;background:#8c8c8c;border-radius:50%;"></div><div class="t" style="left:227.4px;top:1084.37px;font-size:20px;font-weight:700;color:#8c8c8c;letter-spacing:-0.308px;">Offline</div><div class="t" style="left:214.5px;top:1114.37px;font-size:20px;color:#15304b;letter-spacing:-0.39px;">Ubuntu Laptop, 3.3 GHz</div><svg style="position:absolute;left:647.5px;top:1077.0px" width="27" height="24" viewBox="0 0 27 24"><rect x="1" y="1" width="25" height="22" rx="3" stroke="#3b78b8" stroke-width="2" fill="#fff"/><rect x="16.5" y="5" width="5" height="14" rx="1" fill="#3b78b8"/></svg><div class="t" style="left:721.8px;top:1052.27px;font-size:20px;color:#15304b;letter-spacing:-0.027px;">April 06th, 2023 at 15:17</div><svg style="position:absolute;left:721.0px;top:1092.5px" width="26" height="23" viewBox="0 0 26 23"><path d="M12.5 1.4 L23.9 21.2 H1.1 Z" fill="#f5bf28" stroke="#f5bf28" stroke-width="2.2" stroke-linejoin="round"/><path d="M11.2 7.2 Q12.5 6.4 13.8 7.2 L13.1 14.3 H11.9 Z" fill="#fff"/><circle cx="12.5" cy="17.6" r="1.5" fill="#fff"/></svg><div class="t" style="left:759.8px;top:1080.37px;font-size:20px;color:#15304b;letter-spacing:-0.112px;">More than 3 months</div><div class="t" style="left:759.8px;top:1109.17px;font-size:20px;color:#15304b;letter-spacing:-1.025px;">ago</div><div class="t" style="left:1020.5px;top:1080.57px;font-size:20px;color:#15304b;letter-spacing:-0.5px;">No one</div><div class="t" style="left:1154.9px;top:1080.37px;font-size:20px;color:#15304b;letter-spacing:-0.733px;">None</div><div class="t" style="left:1376.6px;top:1080.17px;font-size:20px;color:#3b78b8;letter-spacing:-0.183px;text-decoration:underline;text-underline-offset:1.5px;text-decoration-thickness:1.8px;">No reports</div><div class="t" style="left:1547.3px;top:1080.37px;font-size:20px;color:#15304b;letter-spacing:-1.075px;">1.6.1</div><div style="position:absolute;left:1696.2px;top:1069.3px;width:104.0px;height:39.5px;background:#eaf0f8;border-radius:6px;"></div><svg style="position:absolute;left:1703.7px;top:1074.8px" width="22" height="29" viewBox="0 0 22 29"><path d="M11 1.3C5.6 1.3 1.15 5.5 1.15 11c0 7 9.85 15.9 9.85 15.9S20.85 18 20.85 11C20.85 5.5 16.4 1.3 11 1.3z" fill="#122f47"/><circle cx="11" cy="11.2" r="4.9" fill="#eaf0f8"/></svg><div class="t" style="left:1733.8px;top:1081.07px;font-size:20px;color:#3b78b8;letter-spacing:-0.26px;text-decoration:underline;text-underline-offset:1.5px;text-decoration-thickness:1.8px;">prueba</div><div style="position:absolute;left:2201.5px;top:1061.2px;width:288.5px;height:56.2px;box-sizing:border-box;border:1.6px solid #76a0d2;border-radius:12.5px;background:#fff;"></div><div class="t" style="left:2220.9px;top:1080.15px;font-size:22.5px;color:#15304b;letter-spacing:-0.57px;">Select</div><svg style="position:absolute;left:2469.0px;top:1085.7px" width="15" height="9" viewBox="0 0 15 9"><path d="M1.5 1.5l6 6 6-6" stroke="#15304b" stroke-width="1.7" fill="none"/></svg><div style="position:absolute;left:142.0px;top:1198.2px;width:25.0px;height:25.0px;box-sizing:border-box;border:1.6px solid #7fa7d5;border-radius:4.5px;background:#fff;"></div><svg style="position:absolute;left:210.0px;top:1161.2px" width="44" height="32" viewBox="0 0 44 32"><rect x="8.9" y="8" width="25.9" height="16.9" rx="0.8" fill="#0c0c0c"/><rect x="9.9" y="9" width="23.9" height="15" fill="#2a2a2a"/>
<path d="M27.9 9 H33.8 V24 H23.6 Z" fill="#3a3a3a"/><path d="M27.9 9 H33.8 V14 H26.7 Z" fill="#444"/>
<rect x="4.8" y="24.8" width="34.2" height="2.1" rx="1" fill="#a9a9a9"/></svg><div class="t" style="left:257.7px;top:1168.53px;font-size:23px;font-weight:700;color:#15304b;letter-spacing:-0.999px;">Work Macbook</div><div style="position:absolute;left:214.0px;top:1213.2px;width:8.3px;height:8.3px;background:#8c8c8c;border-radius:50%;"></div><div class="t" style="left:227.4px;top:1204.57px;font-size:20px;font-weight:700;color:#8c8c8c;letter-spacing:-0.308px;">Offline</div><div class="t" style="left:214.5px;top:1234.57px;font-size:20px;color:#15304b;letter-spacing:-0.405px;">Ubuntu Laptop, 1.2 GHz</div><svg style="position:absolute;left:647.5px;top:1197.2px" width="27" height="24" viewBox="0 0 27 24"><rect x="1" y="1" width="25" height="22" rx="3" stroke="#3b78b8" stroke-width="2" fill="#fff"/><rect x="16.5" y="5" width="5" height="14" rx="1" fill="#3b78b8"/></svg><div class="t" style="left:721.8px;top:1172.47px;font-size:20px;color:#15304b;letter-spacing:-0.112px;">August 29th, 2024 at 10:54</div><svg style="position:absolute;left:721.0px;top:1212.7px" width="26" height="23" viewBox="0 0 26 23"><path d="M12.5 1.4 L23.9 21.2 H1.1 Z" fill="#f5bf28" stroke="#f5bf28" stroke-width="2.2" stroke-linejoin="round"/><path d="M11.2 7.2 Q12.5 6.4 13.8 7.2 L13.1 14.3 H11.9 Z" fill="#fff"/><circle cx="12.5" cy="17.6" r="1.5" fill="#fff"/></svg><div class="t" style="left:759.8px;top:1200.57px;font-size:20px;color:#15304b;letter-spacing:-0.112px;">More than 3 months</div><div class="t" style="left:759.8px;top:1229.37px;font-size:20px;color:#15304b;letter-spacing:-1.025px;">ago</div><div class="t" style="left:1020.5px;top:1200.77px;font-size:20px;color:#15304b;letter-spacing:-0.5px;">No one</div><div class="t" style="left:1154.9px;top:1200.57px;font-size:20px;color:#15304b;letter-spacing:-0.733px;">None</div><div class="t" style="left:1376.6px;top:1200.37px;font-size:20px;color:#3b78b8;letter-spacing:-0.183px;text-decoration:underline;text-underline-offset:1.5px;text-decoration-thickness:1.8px;">No reports</div><div class="t" style="left:1547.3px;top:1200.57px;font-size:20px;color:#15304b;letter-spacing:-0.75px;">1.6.2</div><div class="t" style="left:1696.2px;top:1200.37px;font-size:20px;color:#15304b;letter-spacing:-0.064px;">Nothing to show</div><div style="position:absolute;left:2201.5px;top:1181.4px;width:288.5px;height:56.2px;box-sizing:border-box;border:1.6px solid #76a0d2;border-radius:12.5px;background:#fff;"></div><div class="t" style="left:2220.9px;top:1200.35px;font-size:22.5px;color:#15304b;letter-spacing:-0.57px;">Select</div><svg style="position:absolute;left:2469.0px;top:1205.9px" width="15" height="9" viewBox="0 0 15 9"><path d="M1.5 1.5l6 6 6-6" stroke="#15304b" stroke-width="1.7" fill="none"/></svg><div style="position:absolute;left:2488.0px;top:0.0px;width:72.0px;height:1206.0px;background:linear-gradient(to right, rgba(169,178,195,0) 0%, rgba(169,178,195,0.06) 30%, rgba(169,178,195,0.40) 100%);z-index:50;"></div></body></html>
